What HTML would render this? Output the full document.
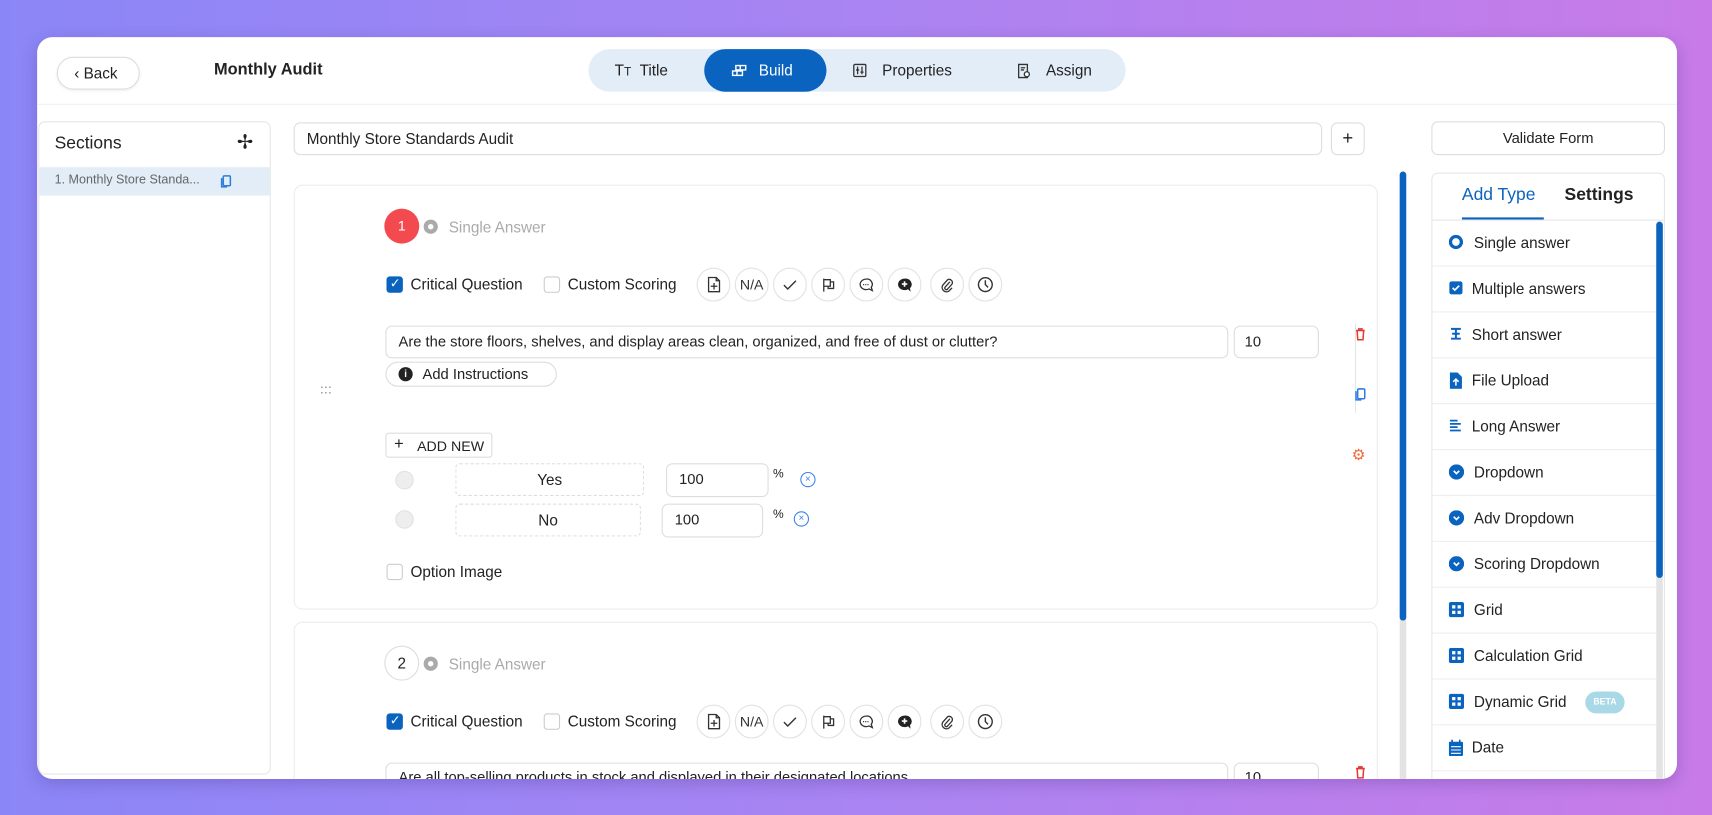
<!DOCTYPE html>
<html><head><meta charset="utf-8"><style>
*{box-sizing:border-box;margin:0;padding:0}
html,body{width:1712px;height:815px;overflow:hidden}
body{background:linear-gradient(90deg,#8b86f7 0%,#a984f2 50%,#c87be8 100%);font-family:"Liberation Sans",sans-serif;color:#222}
#w{position:absolute;left:0;top:0;width:1568px;height:746px;transform:scale(1.0918,1.0925);transform-origin:0 0}
.a{position:absolute}
.card{left:34px;top:34px;width:1502px;height:679px;background:#fff;border-radius:14px;overflow:hidden;box-shadow:0 4px 14px rgba(60,40,120,.25)}
.t{position:absolute;white-space:nowrap}
.bx{position:absolute;border:1px solid #ddd;border-radius:6px;background:#fff}
.ic{position:absolute;width:31px;height:31px;border:1px solid #e2e2e2;border-radius:50%;display:flex;align-items:center;justify-content:center;font-size:13px;color:#333;background:#fff}
.cb{position:absolute;width:15px;height:15px;border:1px solid #ccc;border-radius:3px;background:#fff}
.cbk{background:#0a63be;border-color:#0a63be}
.it{position:absolute;left:0;width:206px;height:42px;border-bottom:1px solid #eee;font-size:14px;color:#222}
.it span{position:absolute;left:38px;top:12px}
.it svg{position:absolute;left:15px;top:13px}
</style></head><body><div id="w">
<div class="a card">
 <!-- header -->
 <div class="a" style="left:0;top:61px;width:1502px;height:1px;background:#f0f0f0"></div>
 <div class="a" style="left:18px;top:18px;width:76px;height:30px;border:1px solid #ddd;border-radius:15px;box-shadow:0 1px 3px rgba(0,0,0,.08)"></div>
 <div class="t" style="left:34px;top:25px;font-size:14px">‹ Back</div>
 <div class="t" style="left:162px;top:21px;font-size:15px;font-weight:bold">Monthly Audit</div>
 <div class="a" style="left:505px;top:11px;width:492px;height:39px;background:#e3edf8;border-radius:20px"></div>
 <div class="a" style="left:611px;top:11px;width:112px;height:39px;background:#0a63be;border-radius:20px"></div>
 <div class="t" style="left:529px;top:22px;font-size:14px">T<span style="font-size:11px">T</span>&nbsp; Title</div>
 <svg class="a" style="left:636px;top:25px" width="14" height="12" viewBox="0 0 14 12" fill="none" stroke="#fff" stroke-width="1.3"><rect x="4" y="1" width="9" height="4"/><rect x="1" y="6" width="9" height="4"/><path d="M8 1v4M5 6v4"/></svg>
 <div class="t" style="left:661px;top:22px;font-size:14px;color:#fff">Build</div>
 <svg class="a" style="left:747px;top:24px" width="13" height="13" viewBox="0 0 13 13" fill="none" stroke="#333" stroke-width="1.2"><rect x="1" y="1" width="11" height="11" rx="1"/><path d="M4.5 3v7M8.5 3v7M3 6h3M7 8h3"/></svg>
 <div class="t" style="left:774px;top:22px;font-size:14px">Properties</div>
 <svg class="a" style="left:898px;top:24px" width="12" height="14" viewBox="0 0 12 14" fill="none" stroke="#333" stroke-width="1.2"><path d="M1 1h8v12H1z"/><path d="M3 4h4M3 6h3"/><circle cx="8.5" cy="10" r="2.3" fill="#fff"/></svg>
 <div class="t" style="left:924px;top:22px;font-size:14px">Assign</div>
 <!-- sections -->
 <div class="a" style="left:1px;top:77px;width:213px;height:598px;border:1px solid #e6e6e6;border-radius:6px"></div>
 <div class="t" style="left:16px;top:89px;font-size:16px">Sections</div>
 <div class="t" style="left:183px;top:86px;font-size:18px">✢</div>
 <div class="a" style="left:2px;top:119px;width:211px;height:26px;background:#e3edf8"></div>
 <div class="t" style="left:16px;top:125px;font-size:11.5px;color:#666">1. Monthly Store Standa...</div>
 <svg class="a" style="left:168px;top:126px" width="10" height="12" viewBox="0 0 10 12" fill="none" stroke="#2f7de1" stroke-width="1.4"><rect x="2.5" y="1" width="6.5" height="9" rx="1"/><path d="M1 3v8h5"/></svg>
 <!-- title input -->
 <div class="bx" style="left:235px;top:78px;width:942px;height:30px"></div>
 <div class="t" style="left:247px;top:85px;font-size:14px">Monthly Store Standards Audit</div>
 <div class="bx" style="left:1185px;top:78px;width:31px;height:30px;text-align:center;font-size:17px;line-height:27px">+</div>
 <!-- q1 -->
 <div class="bx" style="left:235px;top:135px;width:993px;height:389px;border-color:#ececec;border-radius:8px"></div>
 <div class="a" style="left:318px;top:157px;width:32px;height:32px;border-radius:50%;background:#f34a50;color:#fff;font-size:13px;text-align:center;line-height:32px">1</div>
 <div class="a" style="left:354px;top:167px;width:13px;height:13px;border-radius:50%;background:#aaa"><div class="a" style="left:4px;top:4px;width:5px;height:5px;border-radius:50%;background:#fff"></div></div>
 <div class="t" style="left:377px;top:166px;font-size:14px;color:#aaa">Single Answer</div>
 <div class="cb cbk" style="left:320px;top:219px"><span class="a" style="left:2px;top:-2px;color:#fff;font-size:12px">✓</span></div>
 <div class="t" style="left:342px;top:218px;font-size:14px">Critical Question</div>
 <div class="cb" style="left:464px;top:219px"></div>
 <div class="t" style="left:486px;top:218px;font-size:14px">Custom Scoring</div>
 <div id="icons1"></div>
 <div class="bx" style="left:319px;top:264px;width:772px;height:30px"></div>
 <div class="t" style="left:331px;top:271px;font-size:13.5px">Are the store floors, shelves, and display areas clean, organized, and free of dust or clutter?</div>
 <div class="bx" style="left:1096px;top:264px;width:78px;height:30px"></div>
 <div class="t" style="left:1106px;top:271px;font-size:13.5px">10</div>
 <div class="a" style="left:1207px;top:262px;width:1px;height:82px;background:#e5e5e5"></div>
 <svg class="a" style="left:1207px;top:266px" width="10" height="12" viewBox="0 0 10 12" fill="none" stroke="#e53935" stroke-width="1.4"><path d="M1 2.5h8M3.5 2.5V1h3v1.5M2 2.5l.6 8.5h4.8l.6-8.5"/></svg>
 <svg class="a" style="left:1207px;top:321px" width="10" height="12" viewBox="0 0 10 12" fill="none" stroke="#2f7de1" stroke-width="1.4"><rect x="2.5" y="1" width="6.5" height="9" rx="1"/><path d="M1 3v8h5"/></svg>
 <div class="t" style="left:1204px;top:374px;font-size:14px;color:#f06a3c">⚙</div>
 <div class="a" style="left:319px;top:297px;width:157px;height:23px;border:1px solid #ddd;border-radius:12px"></div>
 <div class="a" style="left:331px;top:302px;width:13px;height:13px;border-radius:50%;background:#222;color:#fff;font-size:9px;font-weight:bold;text-align:center;line-height:13px">i</div>
 <div class="t" style="left:353px;top:301px;font-size:13.5px">Add Instructions</div>
 <div class="t" style="left:259px;top:319px;font-size:11px;color:#888;letter-spacing:-1px;line-height:5px">⋯<br>⋯</div>
 <div class="bx" style="left:319px;top:362px;width:98px;height:23px;border-radius:3px"></div>
 <div class="t" style="left:327px;top:364px;font-size:15px">+</div>
 <div class="t" style="left:348px;top:367px;font-size:13px">ADD NEW</div>
 <div class="a" style="left:328px;top:397px;width:17px;height:17px;border-radius:50%;background:#eee;border:1px solid #e2e2e2"></div>
 <div class="a" style="left:383px;top:390px;width:173px;height:30px;border:1px dashed #ddd;border-radius:4px;text-align:center;line-height:28px;font-size:14px">Yes</div>
 <div class="bx" style="left:576px;top:390px;width:94px;height:31px"></div>
 <div class="t" style="left:588px;top:397px;font-size:13.5px">100</div>
 <div class="t" style="left:674px;top:394px;font-size:11px">%</div>
 <div class="a" style="left:699px;top:398px;width:14px;height:14px;border-radius:50%;border:1.5px solid #3b82e8;color:#3b82e8;font-size:9px;text-align:center;line-height:11px">×</div>
 <div class="a" style="left:328px;top:433px;width:17px;height:17px;border-radius:50%;background:#eee;border:1px solid #e2e2e2"></div>
 <div class="a" style="left:383px;top:427px;width:170px;height:30px;border:1px dashed #ddd;border-radius:4px;text-align:center;line-height:28px;font-size:14px">No</div>
 <div class="bx" style="left:572px;top:427px;width:93px;height:31px"></div>
 <div class="t" style="left:584px;top:434px;font-size:13.5px">100</div>
 <div class="t" style="left:674px;top:431px;font-size:11px">%</div>
 <div class="a" style="left:693px;top:434px;width:14px;height:14px;border-radius:50%;border:1.5px solid #3b82e8;color:#3b82e8;font-size:9px;text-align:center;line-height:11px">×</div>
 <div class="cb" style="left:320px;top:482px"></div>
 <div class="t" style="left:342px;top:481px;font-size:14px">Option Image</div>
 <!-- q2 -->
 <div class="bx" style="left:235px;top:535px;width:993px;height:200px;border-color:#ececec;border-radius:8px"></div>
 <div class="a" style="left:318px;top:557px;width:32px;height:32px;border-radius:50%;border:1px solid #ddd;font-size:14px;text-align:center;line-height:30px">2</div>
 <div class="a" style="left:354px;top:567px;width:13px;height:13px;border-radius:50%;background:#aaa"><div class="a" style="left:4px;top:4px;width:5px;height:5px;border-radius:50%;background:#fff"></div></div>
 <div class="t" style="left:377px;top:566px;font-size:14px;color:#aaa">Single Answer</div>
 <div class="cb cbk" style="left:320px;top:619px"><span class="a" style="left:2px;top:-2px;color:#fff;font-size:12px">✓</span></div>
 <div class="t" style="left:342px;top:618px;font-size:14px">Critical Question</div>
 <div class="cb" style="left:464px;top:619px"></div>
 <div class="t" style="left:486px;top:618px;font-size:14px">Custom Scoring</div>
 <div id="icons2"></div>
 <div class="bx" style="left:319px;top:664px;width:772px;height:30px"></div>
 <div class="t" style="left:331px;top:670px;font-size:13.5px">Are all top-selling products in stock and displayed in their designated locations</div>
 <div class="bx" style="left:1096px;top:664px;width:78px;height:30px"></div>
 <div class="t" style="left:1106px;top:670px;font-size:13.5px">10</div>
 <svg class="a" style="left:1207px;top:667px" width="10" height="12" viewBox="0 0 10 12" fill="none" stroke="#e53935" stroke-width="1.4"><path d="M1 2.5h8M3.5 2.5V1h3v1.5M2 2.5l.6 8.5h4.8l.6-8.5"/></svg>
 <!-- scrollbar -->
 <div class="a" style="left:1248px;top:123px;width:6px;height:560px;background:#e3e3e3;border-radius:3px"></div>
 <div class="a" style="left:1248px;top:123px;width:6px;height:411px;background:#0a63be;border-radius:3px"></div>
 <!-- right -->
 <div class="bx" style="left:1277px;top:77px;width:214px;height:31px;text-align:center;line-height:29px;font-size:13.5px">Validate Form</div>
 <div class="a" style="left:1277px;top:124px;width:214px;height:570px;border:1px solid #e6e6e6;border-radius:6px;overflow:hidden">
  <div class="t" style="left:27px;top:11px;font-size:16px;color:#0a63be">Add Type</div>
  <div class="t" style="left:121px;top:11px;font-size:16px;font-weight:bold">Settings</div>
  <div class="a" style="left:27px;top:40px;width:75px;height:2px;background:#0a63be"></div>
  <div class="a" style="left:0;top:42px;width:214px;height:1px;background:#e6e6e6"></div>
  <div class="a" style="left:0;top:43px;width:214px;height:540px">
   <div class="it" style="top:0"><svg width="13" height="13"><circle cx="6.5" cy="6.5" r="5" fill="none" stroke="#0a63be" stroke-width="3"/></svg><span>Single answer</span></div>
   <div class="it" style="top:42px"><svg width="13" height="13"><rect x="0.5" y="0.5" width="12" height="12" rx="2" fill="#0a63be"/><path d="M3.5 6.5l2 2 4-4" stroke="#fff" stroke-width="1.5" fill="none"/></svg><span style="left:36px">Multiple answers</span></div>
   <div class="it" style="top:84px"><svg width="13" height="13" fill="none" stroke="#0a63be" stroke-width="1.8"><path d="M2 2h9M6.5 2v9M2 11h9M3 6.5h7"/></svg><span style="left:36px">Short answer</span></div>
   <div class="it" style="top:126px"><svg width="13" height="15"><path d="M1 0h7l4 4v11H1z" fill="#0a63be"/><path d="M6.5 12V6M4 8.5l2.5-2.5 2.5 2.5" stroke="#fff" stroke-width="1.4" fill="none"/></svg><span style="left:36px">File Upload</span></div>
   <div class="it" style="top:168px"><svg width="13" height="13" stroke="#0a63be" stroke-width="1.6"><path d="M1 2h7M1 5h10M1 8h7M1 11h10"/></svg><span style="left:36px">Long Answer</span></div>
   <div class="it" style="top:210px"><svg width="14" height="14"><circle cx="7" cy="7" r="7" fill="#0a63be"/><path d="M4.5 6l2.5 2.5L9.5 6" stroke="#fff" stroke-width="1.5" fill="none"/></svg><span>Dropdown</span></div>
   <div class="it" style="top:252px"><svg width="14" height="14"><circle cx="7" cy="7" r="7" fill="#0a63be"/><path d="M4.5 6l2.5 2.5L9.5 6" stroke="#fff" stroke-width="1.5" fill="none"/></svg><span>Adv Dropdown</span></div>
   <div class="it" style="top:294px"><svg width="14" height="14"><circle cx="7" cy="7" r="7" fill="#0a63be"/><path d="M4.5 6l2.5 2.5L9.5 6" stroke="#fff" stroke-width="1.5" fill="none"/></svg><span>Scoring Dropdown</span></div>
   <div class="it" style="top:336px"><svg width="14" height="14"><rect width="14" height="14" rx="2" fill="#0a63be"/><path d="M3 3h3v3H3zM8 3h3v3H8zM3 8h3v3H3zM8 8h3v3H8z" fill="#fff"/></svg><span>Grid</span></div>
   <div class="it" style="top:378px"><svg width="14" height="14"><rect width="14" height="14" rx="2" fill="#0a63be"/><path d="M3 3h3v3H3zM8 3h3v3H8zM3 8h3v3H3zM8 8h3v3H8z" fill="#fff"/></svg><span>Calculation Grid</span></div>
   <div class="it" style="top:420px"><svg width="14" height="14"><rect width="14" height="14" rx="2" fill="#0a63be"/><path d="M3 3h3v3H3zM8 3h3v3H8zM3 8h3v3H3zM8 8h3v3H8z" fill="#fff"/></svg><span>Dynamic Grid</span><div class="a" style="left:140px;top:11px;width:36px;height:20px;border-radius:10px;background:#a9d8e6;color:#fff;font-size:8px;font-weight:bold;text-align:center;line-height:20px">BETA</div></div>
   <div class="it" style="top:462px"><svg width="13" height="15"><rect y="2" width="13" height="13" rx="1" fill="#0a63be"/><path d="M3 0v3M10 0v3" stroke="#0a63be" stroke-width="1.5"/><path d="M2 6h9v1H2zM2 9h9v1H2zM2 12h9v1H2z" fill="#fff"/></svg><span style="left:36px">Date</span></div>
  </div>
  <div class="a" style="left:205px;top:43px;width:6px;height:530px;background:#e3e3e3;border-radius:3px"></div>
  <div class="a" style="left:205px;top:44px;width:6px;height:326px;background:#0a63be;border-radius:3px"></div>
 </div>
</div>
</div>
<template id="tpl"></template>
<script>
function icons(top){
 var xs=[604,639,674,709,744,779,818,853];
 var c=[
 '<svg width="12" height="15" fill="none" stroke="#333" stroke-width="1.2"><path d="M1 1h7l3 3v10H1z M8 1v3h3 M6 6v6 M3 9h6"/></svg>',
 '<span style="font-size:13px">N/A</span>',
 '<svg width="13" height="10" fill="none" stroke="#333" stroke-width="1.3"><path d="M1 5l3.5 3.5L12 1"/></svg>',
 '<svg width="12" height="13" fill="none" stroke="#333" stroke-width="1.2"><path d="M1.5 1v12M1.5 2h6v6h-6M7.5 4h3v6h-5V8"/></svg>',
 '<svg width="15" height="14" fill="none" stroke="#333" stroke-width="1.2"><path d="M7 1.5a5.5 4.8 0 1 0 3 9l3 1.5-1-3a5 4.8 0 0 0-5-7.5z"/><path d="M4.5 6.5h5" stroke-dasharray="1 1"/></svg>',
 '<svg width="15" height="14"><path d="M7.5 1a6 5.3 0 1 0 3.2 9.8L13 13l-.5-3.2A6 5.3 0 0 0 7.5 1z" fill="#222"/><path d="M7.5 3.5v5M5 6h5" stroke="#fff" stroke-width="1.5"/></svg>',
 '<svg width="13" height="14" fill="none" stroke="#333" stroke-width="1.2"><path d="M9 4L4.5 9a1.5 1.5 0 0 0 2 2L11 6a3 3 0 0 0-4-4L2.5 7a4 4 0 0 0 5.5 5.5l3-3"/></svg>',
 '<svg width="15" height="15" fill="none" stroke="#333" stroke-width="1.3"><circle cx="7.5" cy="7.5" r="6.3"/><path d="M7.5 3.5v4l2.5 2.5"/></svg>'];
 var h='';for(var i=0;i<8;i++)h+='<div class="ic" style="left:'+xs[i]+'px;top:'+top+'px">'+c[i]+'</div>';
 return h;}
document.getElementById('icons1').outerHTML=icons(211);
document.getElementById('icons2').outerHTML=icons(611);
</script>
</body></html>
